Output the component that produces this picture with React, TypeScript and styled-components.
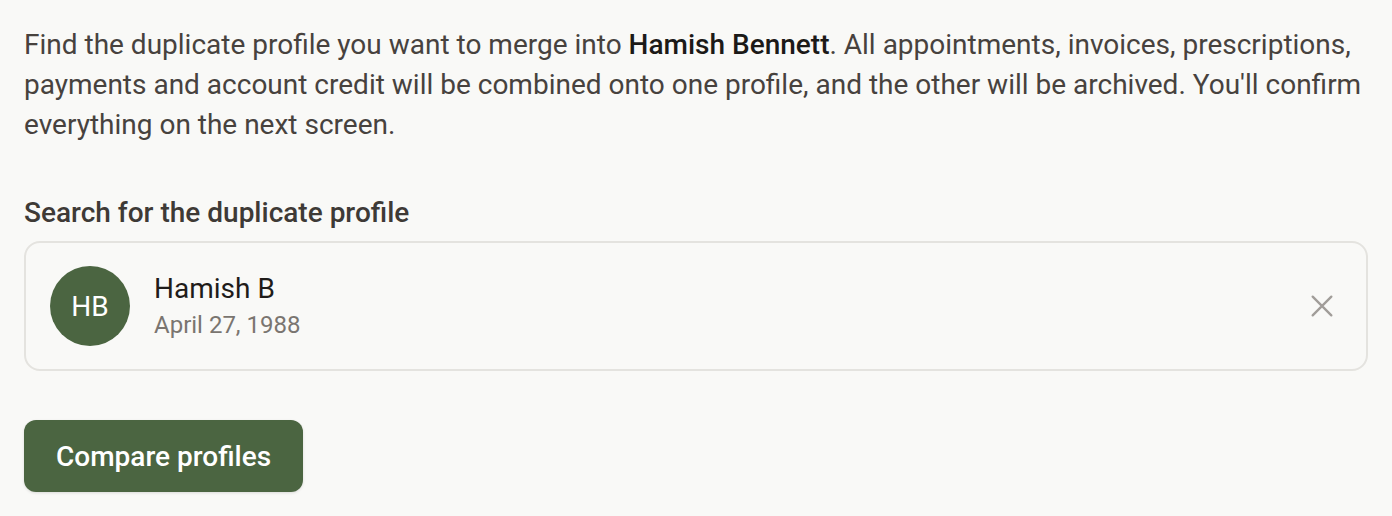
import React from "react";
import styled, { createGlobalStyle } from "styled-components";

const GlobalStyle = createGlobalStyle`
  html, body {
    margin: 0;
    padding: 0;
    background: #f9f9f7;
  }
  body {
    font-family: Roboto, "Noto Sans", sans-serif;
    -webkit-font-smoothing: antialiased;
  }
`;

const Page = styled.div`
  display: flex;
  flex-direction: column;
  padding: 25px 24px 24px 24px;
`;

const Intro = styled.p`
  margin: 0;
  font-size: 28px;
  line-height: 40px;
  color: #47423e;
  max-width: 1344px;

  strong {
    font-weight: 500;
    color: #1c1a18;
  }
`;

const Field = styled.div`
  display: flex;
  flex-direction: column;
  gap: 12px;
  margin-top: 52px;
`;

const Label = styled.label`
  font-size: 28px;
  line-height: 32px;
  font-weight: 500;
  color: #3e3a36;
`;

const Selected = styled.div`
  display: flex;
  align-items: center;
  gap: 24px;
  height: 130px;
  box-sizing: border-box;
  padding: 0 24px;
  border: 2px solid #e4e3df;
  border-radius: 16px;
  background: #f9f9f7;
`;

const Avatar = styled.div`
  display: flex;
  align-items: center;
  justify-content: center;
  width: 80px;
  height: 80px;
  border-radius: 50%;
  background: #4b6541;
  color: #ffffff;
  font-size: 28px;
  flex-shrink: 0;
`;

const Details = styled.div`
  display: flex;
  flex-direction: column;
  flex: 1;
  padding-top: 2px;
`;

const Name = styled.div`
  font-size: 28px;
  line-height: 36px;
  color: #1f1c1a;
`;

const Dob = styled.div`
  font-size: 24px;
  line-height: 36px;
  color: #7a7570;
`;

const ClearButton = styled.button`
  display: flex;
  align-items: center;
  justify-content: center;
  width: 48px;
  height: 48px;
  margin-right: -4px;
  padding: 0;
  border: none;
  background: none;
  color: #a19d99;
  cursor: pointer;
`;

const PrimaryButton = styled.button`
  align-self: flex-start;
  margin-top: 49px;
  height: 72px;
  padding: 0 32px;
  border: none;
  border-radius: 12px;
  background: #4b6541;
  color: #ffffff;
  font-family: Roboto, "Noto Sans", sans-serif;
  font-size: 28px;
  font-weight: 500;
  box-shadow: 0 1px 3px rgba(0, 0, 0, 0.12);
  cursor: pointer;
`;

export default function App() {
  return (
    <>
      <GlobalStyle />
      <Page>
        <Intro>
          Find the duplicate profile you want to merge into <strong>Hamish Bennett</strong>. All
          appointments, invoices, prescriptions, payments and account credit will be combined onto
          one profile, and the other will be archived. You'll confirm everything on the next screen.
        </Intro>
        <Field>
          <Label>Search for the duplicate profile</Label>
          <Selected>
            <Avatar>HB</Avatar>
            <Details>
              <Name>Hamish B</Name>
              <Dob>April 27, 1988</Dob>
            </Details>
            <ClearButton aria-label="Clear selection">
              <svg width="28" height="28" viewBox="0 0 24 24" fill="none" stroke="currentColor" strokeWidth="2" strokeLinecap="round">
                <path d="M4 4l16 16M20 4L4 20" />
              </svg>
            </ClearButton>
          </Selected>
        </Field>
        <PrimaryButton>Compare profiles</PrimaryButton>
      </Page>
    </>
  );
}
